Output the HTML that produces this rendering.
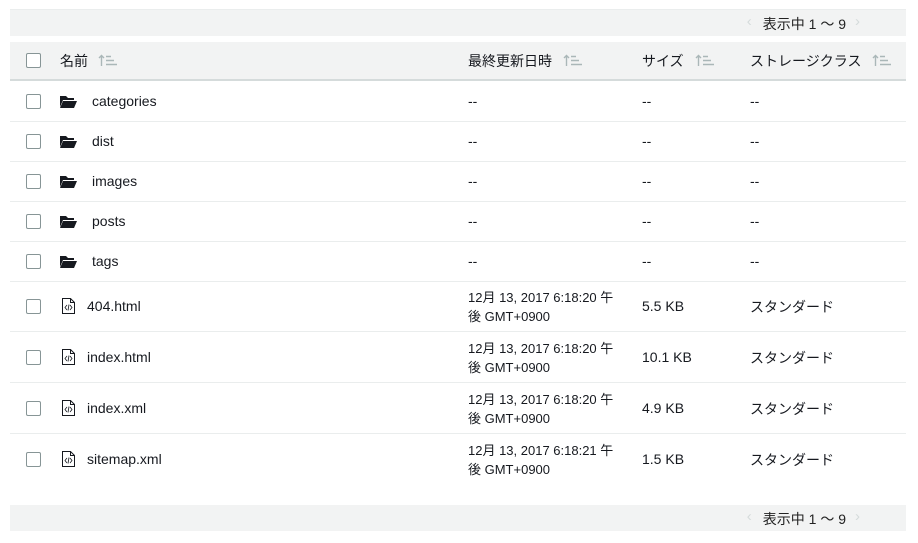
<!DOCTYPE html>
<html><head><meta charset="utf-8"><style>
body{margin:0;width:918px;height:543px;background:#fff;font-family:"Liberation Sans","Noto Sans CJK JP",sans-serif;font-size:14px;color:#16191f;position:relative;overflow:hidden}
.bar{position:absolute;left:10px;width:896px;height:26px;background:#f2f3f3}
.pg{position:absolute;right:60px;top:4px;font-size:14px;color:#222}
.pg .a{color:#d5dbdb;position:absolute;top:-1px;font-size:15px}
.hdr{position:absolute;left:10px;top:42px;width:896px;height:37px;background:#f2f3f3;border-bottom:2px solid #d5dbdb}
.row{position:absolute;left:10px;width:896px;border-bottom:1px solid #eaeded}
.cb{position:absolute;left:16px;width:13px;height:13px;border:1px solid #879596;border-radius:2px;background:#fff}
.t{position:absolute;white-space:nowrap}
.si{position:absolute;top:12px}
.top{position:absolute;left:10px;top:9px;width:896px;border-top:1px solid #eaeded}
</style></head><body>
<div class="top"></div>
<div class="bar" style="top:10px"><div class="pg"><span class="a" style="left:-16px">‹</span>表示中 1 〜 9<span class="a" style="right:-14px">›</span></div></div>
<div class="hdr" id="hd">
<div class="cb" style="top:11px"></div>
<div class="t" style="left:50px;top:9px">名前</div>
<div class="t" style="left:458px;top:9px">最終更新日時</div>
<div class="t" style="left:632px;top:9px">サイズ</div>
<div class="t" style="left:740px;top:9px">ストレージクラス</div>
</div>
<div id="rows"></div>
<div class="bar" style="top:505px"><div class="pg"><span class="a" style="left:-16px">‹</span>表示中 1 〜 9<span class="a" style="right:-14px">›</span></div></div>
<script>
var sv='<svg width="20" height="13" viewBox="0 0 20 13"><path d="M3.5 12V1.5M1 4l2.5-2.5L6 4M8 2.5h5M8 6.5h8M8 10.5h11" fill="none" stroke="#aab7b8" stroke-width="1.4"/></svg>';
[88,553,685,862].forEach(function(x){document.getElementById("hd").innerHTML+='<div class="si" style="left:'+x+'px">'+sv+'</div>';});
var f=["categories","dist","images","posts","tags"],h="",y=81;
var folder='<svg style="position:absolute;left:50px;top:14px" width="17" height="13" viewBox="0 0 17 13"><path d="M0 1h6l2 2h6v2H3L0 12z" fill="#16191f"/><path d="M3 6h14l-3 7H0z" fill="#16191f"/></svg>';
f.forEach(function(n){h+='<div class="row" style="top:'+y+'px;height:40px"><div class="cb" style="top:13px"></div>'+folder+'<div class="t" style="left:82px;top:12px">'+n+'</div><div class="t" style="left:458px;top:12px">--</div><div class="t" style="left:632px;top:12px">--</div><div class="t" style="left:740px;top:12px">--</div></div>';y+=40;});
var fl=[["404.html","12月 13, 2017 6:18:20 午","5.5 KB"],["index.html","12月 13, 2017 6:18:20 午","10.1 KB"],["index.xml","12月 13, 2017 6:18:20 午","4.9 KB"],["sitemap.xml","12月 13, 2017 6:18:21 午","1.5 KB"]];
var fi='<svg style="position:absolute;left:52px;top:17px" width="13" height="16" viewBox="0 0 13 16"><path d="M.5.5h8l4 4v11H.5z M8.5.5v4h4" fill="none" stroke="#16191f"/><path d="M5 7l-2 2.5 2 2.5M8 7l2 2.5-2 2.5M7 6.5l-1 6" fill="none" stroke="#16191f" stroke-width=".8"/></svg>';
fl.forEach(function(r,i){h+='<div class="row" style="top:'+y+'px;height:50px'+(i==3?';border-bottom:none':'')+'"><div class="cb" style="top:18px"></div>'+fi+'<div class="t" style="left:77px;top:17px">'+r[0]+'</div><div class="t" style="left:458px;top:7px;font-size:13px;line-height:19px">'+r[1]+'<br>後 GMT+0900</div><div class="t" style="left:632px;top:17px">'+r[2]+'</div><div class="t" style="left:740px;top:16px">スタンダード</div></div>';y+=51;});
document.getElementById("rows").innerHTML=h;
</script>
</body></html>
